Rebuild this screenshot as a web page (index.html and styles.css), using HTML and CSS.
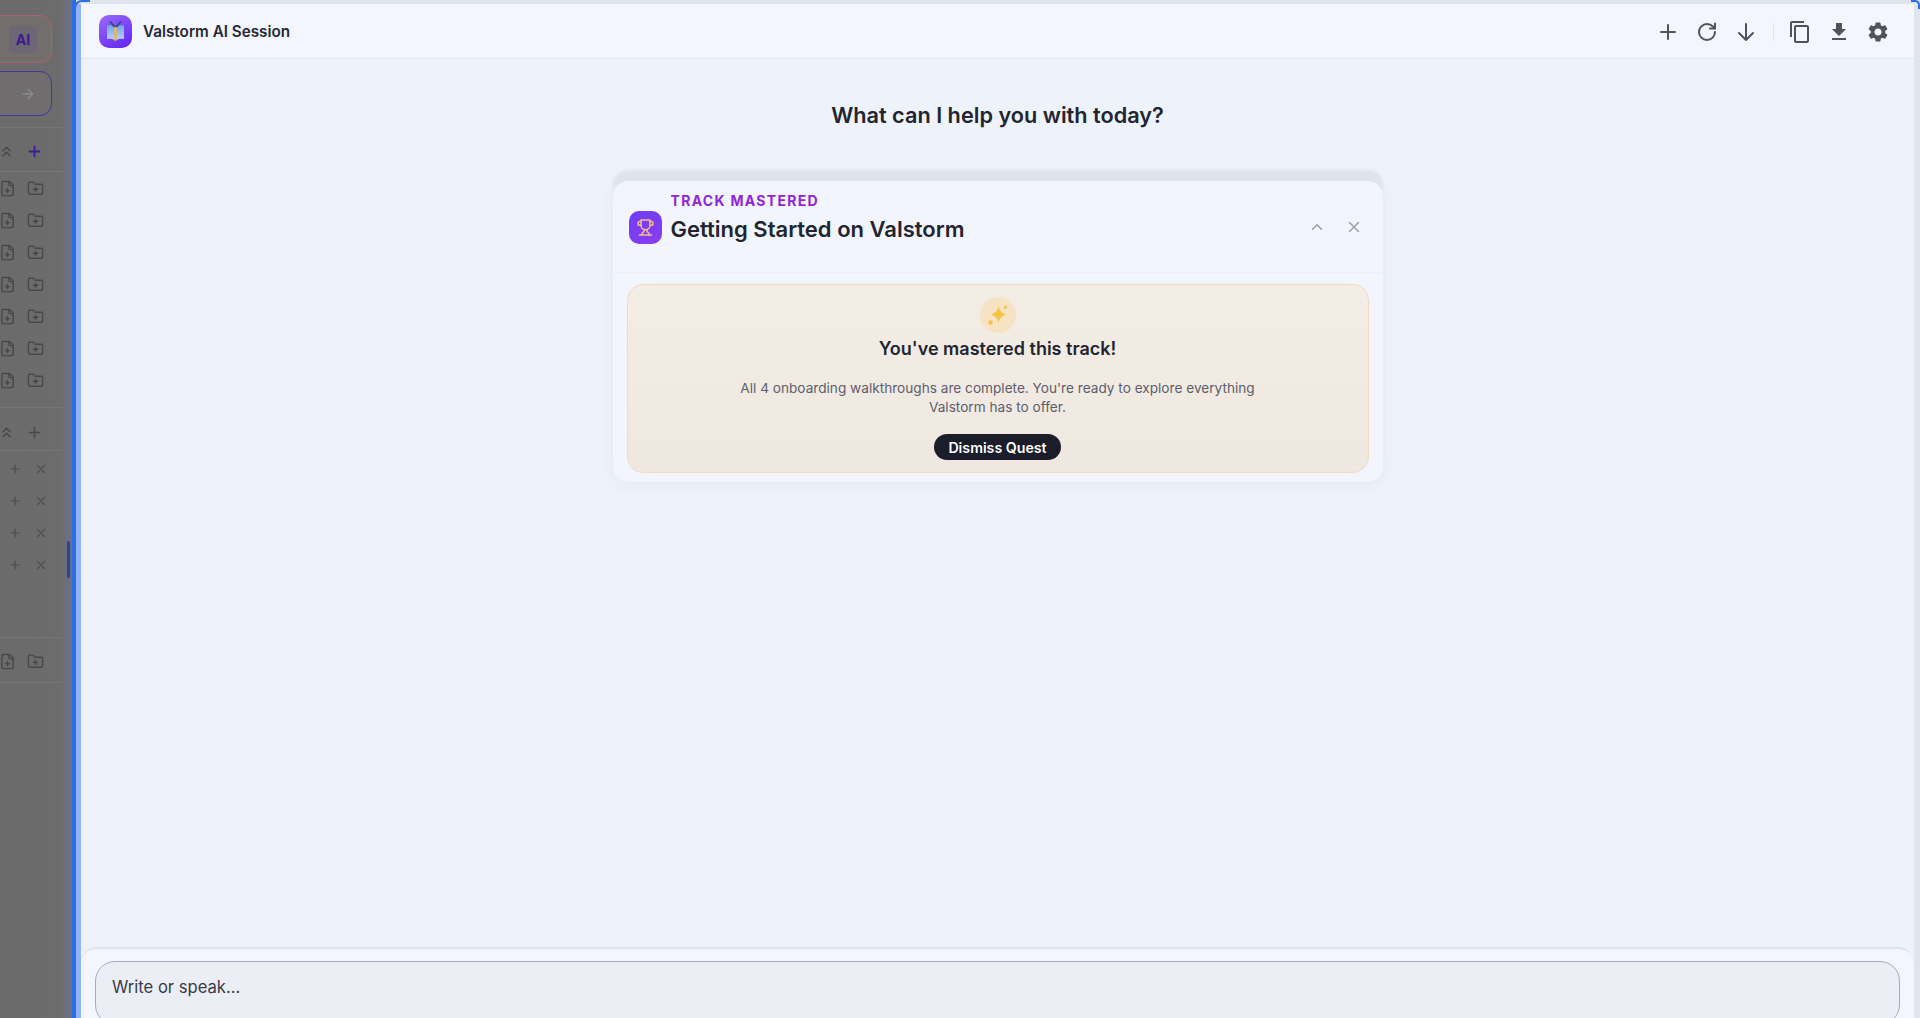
FILE: index.html
```html
<!DOCTYPE html>
<html lang="en">
<head>
<meta charset="utf-8">
<title>Valstorm AI Session</title>
<link rel="stylesheet" href="styles.css">
</head>
<body>
<svg class="defs" aria-hidden="true">
  <symbol id="chevs" viewBox="0 0 24 24"><path d="m17 11-5-5-5 5M17 18l-5-5-5 5"/></symbol>
  <symbol id="plus" viewBox="0 0 24 24"><path d="M5 12h14M12 5v14"/></symbol>
  <symbol id="cross" viewBox="0 0 24 24"><path d="M18 6 6 18M6 6l12 12"/></symbol>
  <symbol id="docplus" viewBox="0 0 24 24"><path d="M15 2H6a2 2 0 0 0-2 2v16a2 2 0 0 0 2 2h12a2 2 0 0 0 2-2V7z"/><path d="M14 2v4a2 2 0 0 0 2 2h4M9 15h6M12 18v-6"/></symbol>
  <symbol id="folderplus" viewBox="0 0 24 24"><path d="M12 10v6M9 13h6M20 20a2 2 0 0 0 2-2V8a2 2 0 0 0-2-2h-7.9a2 2 0 0 1-1.69-.9L9.6 3.9A2 2 0 0 0 7.93 3H4a2 2 0 0 0-2 2v13a2 2 0 0 0 2 2Z"/></symbol>
</svg>
<div class="shell">
  <aside class="sidebar">
    <div class="ai-box"><span class="ai-badge">AI</span></div>
    <div class="go-box">
      <svg class="ico ico-go" viewBox="0 0 24 24"><path d="M5 12h14M12 5l7 7-7 7"/></svg>
    </div>
    <div class="sec-head sec-head-a">
      <svg class="ico ico-md"><use href="#chevs"/></svg>
      <svg class="ico ico-md ico-accent"><use href="#plus"/></svg>
    </div>
    <div class="sec-list sec-list-a">
      <div class="row"><svg class="ico ico-md"><use href="#docplus"/></svg><svg class="ico ico-md"><use href="#folderplus"/></svg></div>
      <div class="row"><svg class="ico ico-md"><use href="#docplus"/></svg><svg class="ico ico-md"><use href="#folderplus"/></svg></div>
      <div class="row"><svg class="ico ico-md"><use href="#docplus"/></svg><svg class="ico ico-md"><use href="#folderplus"/></svg></div>
      <div class="row"><svg class="ico ico-md"><use href="#docplus"/></svg><svg class="ico ico-md"><use href="#folderplus"/></svg></div>
      <div class="row"><svg class="ico ico-md"><use href="#docplus"/></svg><svg class="ico ico-md"><use href="#folderplus"/></svg></div>
      <div class="row"><svg class="ico ico-md"><use href="#docplus"/></svg><svg class="ico ico-md"><use href="#folderplus"/></svg></div>
      <div class="row"><svg class="ico ico-md"><use href="#docplus"/></svg><svg class="ico ico-md"><use href="#folderplus"/></svg></div>
    </div>
    <div class="sec-head sec-head-b">
      <svg class="ico ico-md"><use href="#chevs"/></svg>
      <svg class="ico ico-md"><use href="#plus"/></svg>
    </div>
    <div class="sec-list sec-list-b">
      <div class="row row-b"><svg class="ico ico-sm"><use href="#plus"/></svg><svg class="ico ico-sm"><use href="#cross"/></svg></div>
      <div class="row row-b"><svg class="ico ico-sm"><use href="#plus"/></svg><svg class="ico ico-sm"><use href="#cross"/></svg></div>
      <div class="row row-b"><svg class="ico ico-sm"><use href="#plus"/></svg><svg class="ico ico-sm"><use href="#cross"/></svg></div>
      <div class="row row-b"><svg class="ico ico-sm"><use href="#plus"/></svg><svg class="ico ico-sm"><use href="#cross"/></svg></div>
    </div>
    <div class="sec-head sec-head-c">
      <svg class="ico ico-md"><use href="#docplus"/></svg>
      <svg class="ico ico-md"><use href="#folderplus"/></svg>
    </div>
    <span class="resizer"></span>
  </aside>

  <main class="main">
    <div class="panel">
      <header class="topbar">
        <svg class="logo" viewBox="0 0 33 33">
          <defs>
            <linearGradient id="logoBg" x1="0" y1="0" x2="0.6" y2="1"><stop offset="0" stop-color="#9a6cf8"/><stop offset="1" stop-color="#6a2df2"/></linearGradient>
            <linearGradient id="logoPage" x1="0" y1="0" x2="0" y2="1"><stop offset="0" stop-color="#6fa6ea"/><stop offset="1" stop-color="#c0d4f8"/></linearGradient>
          </defs>
          <rect width="33" height="33" rx="10" fill="url(#logoBg)"/>
          <path d="M8 10.500c3.200-.5 6.200 0 8.500 1.500 2.300-1.500 5.300-2 8.500-1.500v13.500c-3.200-.5-6.200 0-8.500 1.500-2.300-1.500-5.300-2-8.500-1.500z" fill="url(#logoPage)"/>
          <path d="M11.500 7l5 6 5-6" fill="none" stroke="#2e4b86" stroke-width="1.800" stroke-linecap="round"/>
          <path d="M16.500 12v13.500" stroke="#e6b45c" stroke-width="2.600"/>
        </svg>
        <span class="session-title">Valstorm AI Session</span>
        <div class="tools">
          <div class="tool-group tool-group-a">
            <svg class="tool"><use href="#plus"/></svg>
            <svg class="tool" viewBox="0 0 24 24"><path d="M20 12a8 8 0 1 1-8-8c2.300 0 4.400 .9 6 2.500L20 8.500"/><path d="M20 3.500v5h-5"/></svg>
            <svg class="tool" viewBox="0 0 24 24"><path d="M12 4v16M5 13l7 7 7-7"/></svg>
          </div>
          <span class="tool-sep"></span>
          <div class="tool-group tool-group-b">
            <svg class="tool tool-fill" viewBox="0 0 24 24"><path d="M16 1H4c-1.100 0-2 .9-2 2v14h2V3h12V1zm3 4H8c-1.100 0-2 .9-2 2v14c0 1.100.9 2 2 2h11c1.100 0 2-.9 2-2V7c0-1.100-.9-2-2-2zm0 16H8V7h11v14z"/></svg>
            <svg class="tool tool-fill" viewBox="0 0 24 24"><path d="M19 9h-4V3H9v6H5l7 7 7-7zM5 18v2h14v-2H5z"/></svg>
            <svg class="tool tool-fill" viewBox="0 0 24 24"><path d="M19.140 12.940c.04-.3.06-.61.06-.94 0-.32-.02-.64-.07-.94l2.030-1.580a.49.49 0 0 0 .12-.61l-1.920-3.320a.488.488 0 0 0-.59-.22l-2.390.96c-.5-.38-1.030-.7-1.620-.94l-.36-2.540a.484.484 0 0 0-.48-.41h-3.840c-.24 0-.43.17-.47.41l-.36 2.540c-.59.24-1.130.57-1.620.94l-2.390-.96c-.22-.08-.47 0-.59.22L2.740 8.870c-.12.21-.08.47.12.61l2.030 1.580c-.05.3-.09.63-.09.94s.02.64.07.94l-2.030 1.580a.49.49 0 0 0-.12.61l1.920 3.320c.12.22.37.29.59.22l2.390-.96c.5.38 1.030.7 1.620.94l.36 2.540c.05.24.24.41.48.41h3.840c.24 0 .44-.17.47-.41l.36-2.540c.59-.24 1.130-.56 1.620-.94l2.390.96c.22.08.47 0 .59-.22l1.920-3.320c.12-.22.07-.47-.12-.61l-2.010-1.580zM12 15.600c-1.980 0-3.600-1.620-3.600-3.600s1.620-3.600 3.600-3.600 3.600 1.620 3.600 3.600-1.620 3.600-3.600 3.600z"/></svg>
          </div>
        </div>
      </header>

      <section class="content">
        <h1 class="greeting">What can I help you with today?</h1>
        <article class="quest">
          <div class="quest-head">
            <svg class="trophy" viewBox="0 0 33 33">
              <defs><linearGradient id="trophyBg" x1="0.2" y1="0" x2="0.7" y2="1"><stop offset="0" stop-color="#6f3ef5"/><stop offset="1" stop-color="#8a3cf0"/></linearGradient></defs>
              <rect width="33" height="33" rx="10" fill="url(#trophyBg)"/>
              <g transform="translate(7.500 7.500) scale(.75)" fill="none" stroke="#f6bd8e" stroke-width="2" stroke-linecap="round" stroke-linejoin="round">
                <path d="M6 9H4.500a2.500 2.500 0 0 1 0-5H6M18 9h1.500a2.500 2.500 0 0 0 0-5H18M4 22h16"/>
                <path d="M10 14.660V17c0 .55-.47.98-.97 1.210C7.850 18.750 7 20.240 7 22M14 14.660V17c0 .55.47.98.97 1.210C16.150 18.750 17 20.240 17 22"/>
                <path d="M18 2H6v7a6 6 0 0 0 12 0V2Z"/>
              </g>
            </svg>
            <div class="quest-titles">
              <span class="quest-label">TRACK MASTERED</span>
              <h2 class="quest-title">Getting Started on Valstorm</h2>
            </div>
            <div class="quest-controls">
              <svg class="ctl" viewBox="0 0 24 24"><path d="m18 15-6-6-6 6"/></svg>
              <svg class="ctl"><use href="#cross"/></svg>
            </div>
          </div>
          <div class="mastered">
            <span class="spark-wrap">
              <svg class="spark" viewBox="0 0 24 24"><path d="M12.500 3c1 4.800 3.100 7.200 8 8.500-4.900 1.300-7 3.700-8 8.500-1-4.800-3.100-7.200-8-8.500 4.900-1.300 7-3.700 8-8.500z"/><path d="M19.500 1.500l.8 2 2 .8-2 .8-.8 2-.8-2-2-.8 2-.8z"/><circle cx="4.500" cy="19.500" r="2.200"/></svg>
            </span>
            <h3 class="mastered-title">You've mastered this track!</h3>
            <p class="mastered-text">All 4 onboarding walkthroughs are complete. You're ready to explore everything Valstorm has to offer.</p>
            <button class="dismiss" type="button">Dismiss Quest</button>
          </div>
        </article>
      </section>

      <footer class="composer">
        <div class="prompt">Write or speak...</div>
      </footer>
    </div>
  </main>
</div>
</body>
</html>
```

FILE: styles.css
```css
* { box-sizing: border-box; }
html, body { margin: 0; height: 100%; overflow: hidden; }
body { font-family: Inter, "Liberation Sans", sans-serif; background: #dfe4ee; color: #22252f; }
.defs { display: none; }
.shell { display: flex; height: 1018px; }

/* dimmed sidebar */
.sidebar {
  position: relative;
  flex: 0 0 72px;
  padding: 15px 10px 0 0;
  display: flex;
  flex-direction: column;
  background: linear-gradient(90deg, #6b6b6b 0, #6c6c6d 60px, #6a7387 72px);
  overflow: hidden;
}
.ai-box {
  flex: none;
  height: 48px;
  width: 72px;
  margin-left: -20px;
  border: 1px solid #a8636e;
  border-radius: 12px;
  padding-left: 28px;
  display: flex;
  align-items: center;
  background: #736d6b;
}
.ai-badge {
  width: 28px;
  height: 27px;
  border-radius: 5px;
  background: #6c6775;
  color: #3c1a8a;
  font-size: 14px;
  font-weight: 700;
  display: flex;
  align-items: center;
  justify-content: center;
}
.go-box {
  flex: none;
  height: 45px;
  width: 72px;
  margin: 8px 0 11px -20px;
  border: 1.500px solid #43379a;
  border-radius: 12px;
  padding-right: 15px;
  display: flex;
  align-items: center;
  justify-content: flex-end;
  background: #6f6d6d;
}
.ico { fill: none; stroke: #48484c; stroke-width: 2; stroke-linecap: round; stroke-linejoin: round; flex: none; }
.ico-go { width: 16px; height: 16px; stroke: #8c8c8c; }
.ico-md { width: 17px; height: 17px; }
.ico-sm { width: 14px; height: 14px; stroke: #4c4c50; }
.ico-accent { stroke: #3a1c94; stroke-width: 2.600; }

.sec-head, .row { display: flex; align-items: center; justify-content: flex-end; }
.sec-head { flex: none; border-top: 1px solid #767678; gap: 11px; padding-right: 20px; margin-right: -1px; }
.sec-head-a { height: 45px; padding-top: 3px; border-bottom: 1px solid #767678; }
.sec-head-b { height: 44px; padding-top: 6px; border-bottom: 1px solid #767678; }
.sec-head-c { height: 46px; padding-top: 2px; padding-right: 19px; border-bottom: 1px solid #767678; }
.sec-list { flex: none; }
.sec-list-a { height: 235px; }
.sec-list-b { height: 186px; padding-top: 2px; }
.row { height: 32px; gap: 11px; padding-right: 18px; }
.row-b { gap: 12px; padding-right: 14px; }
.resizer { position: absolute; left: 67px; top: 541px; width: 3px; height: 37px; border-radius: 2px; background: #3a3f96; }

/* main frame */
.main {
  position: relative;
  flex: 1;
  min-width: 0;
  padding: 4px 6px 0 0;
  border-left: 4px solid #2f6de4;
  background: #dfe4ee;
}
.main::before {
  content: "";
  position: absolute;
  left: -2px;
  top: 0;
  width: 14px;
  height: 6px;
  border-top: 2px solid #2f6de4;
  border-left: 2px solid #2f6de4;
  border-top-left-radius: 8px;
}
.main::after {
  content: "";
  position: absolute;
  right: 0;
  top: 0;
  width: 7px;
  height: 7px;
  border-top: 2px solid #2f6de4;
  border-right: 2px solid #2f6de4;
  border-top-right-radius: 5px;
}
.panel {
  height: 100%;
  border-left: 5px solid #a9c4fb;
  border-image: linear-gradient(90deg, #8fb4fb, #dde6fb) 1;
  display: flex;
  flex-direction: column;
  background: #eef2fa;
  overflow: hidden;
}

/* top bar */
.topbar {
  flex: none;
  height: 55px;
  padding: 1px 24px 0 18px;
  display: flex;
  align-items: center;
  gap: 11px;
  background: #f3f6fe;
  border-bottom: 1px solid #e2e6ef;
}
.logo { width: 33px; height: 33px; flex: none; }
.session-title { font-size: 15.250px; font-weight: 600; color: #262934; }
.tools { margin-left: auto; display: flex; align-items: center; }
.tool-group { display: flex; align-items: center; }
.tool-group-a { gap: 15px; }
.tool-group-b { gap: 15px; margin-left: 14px; }
.tool { width: 24px; height: 24px; fill: none; stroke: #50535c; stroke-width: 2; stroke-linecap: round; stroke-linejoin: round; }
.tool-fill { fill: #50535c; stroke: none; }
.tool-sep { width: 1px; height: 18px; margin-left: 15px; background: #dfe3ea; }

/* center */
.content { flex: 1; min-height: 0; display: flex; flex-direction: column; align-items: center; }
.greeting { margin: 40px 0 50px; font-size: 21.700px; line-height: 32px; font-weight: 600; color: #22252f; }
.quest {
  width: 772px;
  height: 302px;
  background: #f2f5fe;
  border: 1px solid #e9edf6;
  border-top: 0;
  border-radius: 16px;
  box-shadow: 0 -12px 3px -1px #dfe3ec, 0 2px 14px rgba(70, 80, 110, .05);
}
.quest-head {
  height: 92px;
  padding: 11px 0 0 16px;
  display: flex;
  border-bottom: 1px solid #ecf0f9;
  gap: 9px;
}
.trophy { width: 33px; height: 33px; flex: none; margin-top: 19px; }
.quest-titles { display: flex; flex-direction: column; }
.quest-label { font-size: 14px; line-height: 18px; font-weight: 700; letter-spacing: 1.300px; color: #9025d8; }
.quest-title { margin: 5px 0 0; font-size: 22px; line-height: 28px; font-weight: 600; color: #22252f; }
.quest-controls { margin-left: auto; display: flex; align-items: center; gap: 19px; padding: 0 20px 0 0; height: 18px; margin-top: 26px; }
.ctl { width: 18px; height: 18px; fill: none; stroke: #9a9eaa; stroke-width: 2; stroke-linecap: round; stroke-linejoin: round; }
.mastered {
  margin: 11px 14px 0;
  height: 189px;
  padding-top: 12px;
  display: flex;
  flex-direction: column;
  align-items: center;
  border: 1px solid #f0dcc0;
  border-radius: 16px;
  background: linear-gradient(180deg, #f3ede6, #efe8e1);
}
.spark-wrap { width: 36px; height: 36px; border-radius: 50%; background: #f6e3c4; display: flex; align-items: center; justify-content: center; }
.spark { width: 24px; height: 24px; fill: #f6c244; }
.mastered-title { margin: 3px 0 0; font-size: 18px; line-height: 26px; font-weight: 600; color: #22252f; }
.mastered-text { margin: 17px 0 0; width: 530px; font-size: 13.630px; line-height: 18.500px; text-align: center; color: #5c5e6a; }
.dismiss {
  margin-top: 18px;
  width: 127px;
  height: 26px;
  padding: 0;
  border: 0;
  border-radius: 13px;
  background: #1b1d2b;
  color: #fff;
  font-family: inherit;
  font-size: 14.200px;
  font-weight: 600;
}

/* composer */
.composer {
  flex: none;
  height: 71px;
  padding: 12px 14px 0 14px;
  background: #f3f6fe;
  border-top: 2px solid #dfe3ec;
  border-radius: 16px 16px 0 0;
  overflow: hidden;
}
.prompt {
  height: 64px;
  padding: 13px 0 0 16px;
  border: 1px solid #a9a9b4;
  border-radius: 20px;
  background: #eceef6;
  font-size: 16.600px;
  line-height: 24px;
  color: #383b46;
}
```
